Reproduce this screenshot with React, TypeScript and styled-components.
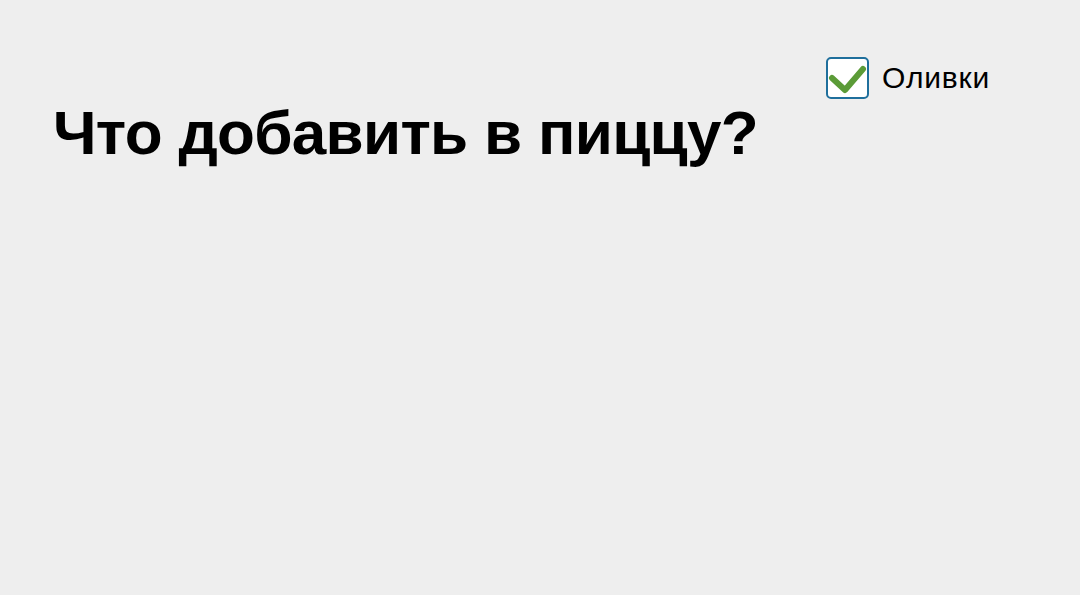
import React, { useState } from "react";
import styled, { createGlobalStyle } from "styled-components";

const GlobalStyle = createGlobalStyle`
  html, body {
    margin: 0;
    padding: 0;
    background: #eeeeee;
    font-family: "Liberation Sans", Arial, sans-serif;
    color: #000;
  }
`;

const Page = styled.div`
  width: 1080px;
  height: 595px;
  box-sizing: border-box;
  padding: 57px 0 0 53px;
  display: flex;
  flex-direction: column;
`;

const TopBar = styled.div`
  display: flex;
  justify-content: flex-end;
  padding-right: 90px;
`;

const OptionLabel = styled.label`
  display: flex;
  align-items: center;
  gap: 13px;
  font-size: 30px;
  letter-spacing: 0.8px;
  cursor: pointer;
  user-select: none;
`;

const Box = styled.span<{ checked: boolean }>`
  width: 43px;
  height: 42px;
  box-sizing: border-box;
  border: 2px solid #1f6f9c;
  border-radius: 5px;
  background: #fff;
  display: flex;
  align-items: center;
  justify-content: center;
  svg {
    visibility: ${(p) => (p.checked ? "visible" : "hidden")};
  }
`;

const Title = styled.h1`
  margin: 3px 0 0;
  font-size: 62px;
  font-weight: 700;
  letter-spacing: -0.7px;
  line-height: 1;
`;

const App = () => {
  const [olives, setOlives] = useState(true);

  return (
    <>
      <GlobalStyle />
      <Page>
        <TopBar>
          <OptionLabel onClick={() => setOlives(!olives)}>
            <Box checked={olives}>
              <svg width="39" height="38" viewBox="0 0 39 38">
                <path
                  d="M4 19 L17 31 L35 10"
                  fill="none"
                  stroke="#5b9b37"
                  strokeWidth="6"
                  strokeLinecap="round"
                  strokeLinejoin="round"
                />
              </svg>
            </Box>
            Оливки
          </OptionLabel>
        </TopBar>
        <Title>Что добавить в пиццу?</Title>
      </Page>
    </>
  );
};

export default App;
